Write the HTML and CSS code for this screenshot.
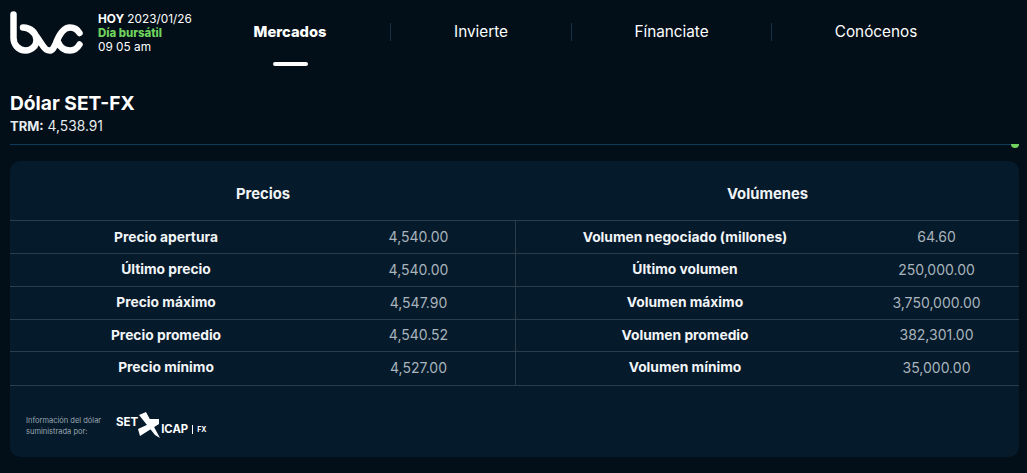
FILE: index.html

```html
<!DOCTYPE html>
<html lang="es">
<head>
    <meta charset="UTF-8">
    <meta name="viewport" content="width=device-width, initial-scale=1.0">
    <title>Dólar SET-FX</title>
    <link rel="stylesheet" href="styles.css">
</head>
<body>
    <header class="header">
        <svg class="logo" width="73" height="44" viewBox="0 0 73 44">
            <path d="M3.500 3.500V27C3.500 34 9 39.500 15.500 39.500C22 39.500 26.500 34.500 26.500 29C26.500 22 21 16.500 13 16.500C19 16.500 23 20 27 26L33 35C35 38 37 39.500 39.500 39.500C42.500 39.500 44 36.500 46 32C49 24 53 16.500 60 16.500C64 16.500 67.500 18.500 69.500 22M69.500 33.500C67.500 37 64 39.500 60 39.500C54 39.500 50 36 48 31" fill="none" stroke="#fff" stroke-width="6.500" stroke-linecap="round" stroke-linejoin="round"/>
        </svg>
        <div class="market-info">
            <div><b>HOY</b> 2023/01/26</div>
            <div class="market-open">Día bursátil</div>
            <div>09 05 am</div>
        </div>
        <nav class="nav">
            <a class="nav-item active" href="#">Mercados</a>
            <a class="nav-item" href="#">Invierte</a>
            <a class="nav-item" href="#">Fínanciate</a>
            <a class="nav-item" href="#">Conócenos</a>
        </nav>
    </header>

    <section class="title-block">
        <h1>Dólar SET-FX</h1>
        <p><b>TRM:</b> 4,538.91</p>
    </section>

    <div class="progress"><span class="progress-dot"></span></div>

    <main class="panel">
        <div class="columns">
            <div class="column column-left">
                <h2>Precios</h2>
                <div class="row"><span class="label">Precio apertura</span><span class="value">4,540.00</span></div>
                <div class="row"><span class="label">Último precio</span><span class="value">4,540.00</span></div>
                <div class="row"><span class="label">Precio máximo</span><span class="value">4,547.90</span></div>
                <div class="row"><span class="label">Precio promedio</span><span class="value">4,540.52</span></div>
                <div class="row"><span class="label">Precio mínimo</span><span class="value">4,527.00</span></div>
            </div>
            <div class="column column-right">
                <h2>Volúmenes</h2>
                <div class="row"><span class="label">Volumen negociado (millones)</span><span class="value">64.60</span></div>
                <div class="row"><span class="label">Último volumen</span><span class="value">250,000.00</span></div>
                <div class="row"><span class="label">Volumen máximo</span><span class="value">3,750,000.00</span></div>
                <div class="row"><span class="label">Volumen promedio</span><span class="value">382,301.00</span></div>
                <div class="row"><span class="label">Volumen mínimo</span><span class="value">35,000.00</span></div>
            </div>
        </div>
        <footer class="source">
            <p>Información del dólar<br>suministrada por:</p>
            <div class="source-logo">
                <span class="set">SET</span>
                <svg class="source-mark" width="24" height="28" viewBox="0 0 24 28">
                    <path d="M1 3L8 0L22 26L17 23Z" fill="#fff"/>
                    <path d="M0 17L12 11.500L11 7H21L21 12L2 24Z" fill="#fff"/>
                </svg>
                <span class="icap">ICAP</span>
                <span class="fx">FX</span>
            </div>
        </footer>
    </main>
</body>
</html>
```

FILE: styles.css

```css
* {
    margin: 0;
    padding: 0;
    box-sizing: border-box;
}

body {
    background-color: #020e18;
    color: #fff;
    font-family: Inter, Arial, sans-serif;
    padding: 0 8px 0 10px;
}

.header {
    display: flex;
    height: 87px;
    align-items: flex-start;
}

.logo {
    margin-top: 11px;
}

.market-info {
    margin: 12px 0 0 15px;
    width: 92px;
    font-size: 11.800px;
    line-height: 14px;
    white-space: nowrap;
}

.market-open {
    color: #6fd35e;
    font-size: 11.400px;
    font-weight: 800;
}

.nav {
    display: flex;
    margin-top: 23px;
}

.nav-item {
    display: block;
    position: relative;
    width: 181px;
    height: 18px;
    font-size: 15.300px;
    line-height: 18px;
    text-align: center;
    color: #fff;
    text-decoration: none;
    border-right: 1px solid #1d3040;
}

.nav-item:nth-child(3) {
    width: 200px;
}

.nav-item:last-child {
    width: 208px;
    border-right: none;
}

.nav-item.active {
    width: 201px;
    font-size: 14.700px;
    font-weight: 800;
}

.nav-item.active::after {
    content: "";
    position: absolute;
    left: 83px;
    top: 39px;
    width: 35px;
    height: 4px;
    border-radius: 2px;
    background: #fff;
}

.title-block h1 {
    font-size: 19.200px;
    line-height: 24px;
    font-weight: 700;
    margin-top: 4px;
}

.title-block p {
    font-size: 13.800px;
    line-height: 18px;
    color: #e6ecef;
    margin-top: 2px;
}

.title-block b {
    font-size: 13px;
}

.progress {
    position: relative;
    height: 1px;
    margin-top: 9px;
    background: #0e3a5c;
}

.progress-dot {
    position: absolute;
    right: 0;
    top: 0;
    width: 8px;
    height: 4px;
    border-radius: 0 0 4px 4px;
    background: #6fd35e;
}

.panel {
    margin-top: 16px;
    height: 296px;
    background: #051a2b;
    border-radius: 10px;
}

.columns {
    display: grid;
    grid-template-columns: 506px 503px;
    border-bottom: 1px solid #2a3d4c;
}

.column h2 {
    height: 60px;
    font-size: 14.800px;
    line-height: 66px;
    font-weight: 700;
    text-align: center;
    color: #f0f3f5;
    border-bottom: 1px solid #2a3d4c;
}

.row {
    display: grid;
    height: 33px;
    padding-bottom: 2px;
    align-items: center;
    text-align: center;
    border-bottom: 1px solid #2a3d4c;
}

.row:nth-child(2) {
    padding-bottom: 1px;
}

.row:nth-child(5) {
    height: 32px;
}

.row:last-child {
    height: 33px;
    padding-bottom: 3px;
    border-bottom: none;
}

.column-left .row {
    grid-template-columns: 312px 193px;
    border-right: 1px solid #2a3d4c;
}

.column-right .row {
    grid-template-columns: 338px 165px;
}

.label {
    font-size: 13.800px;
    font-weight: 700;
    color: #f2f5f7;
}

.value {
    font-size: 14px;
    color: #a9b4bc;
}

.source {
    display: flex;
    align-items: center;
    padding: 25px 0 0 16px;
}

.source p {
    width: 90px;
    font-size: 7.500px;
    line-height: 11px;
    color: #9aa7b1;
}

.source-logo {
    display: flex;
    align-items: center;
    color: #fff;
    font-weight: 700;
}

.set {
    font-size: 11.500px;
    margin-bottom: 8px;
}

.source-mark {
    margin-top: 1px;
}

.icap {
    font-size: 11.300px;
    margin: 7px 0 0 -1px;
    padding-right: 4px;
    border-right: 1px solid #fff;
    line-height: 9px;
}

.fx {
    font-size: 7px;
    margin: 7px 0 0 4px;
}
```
